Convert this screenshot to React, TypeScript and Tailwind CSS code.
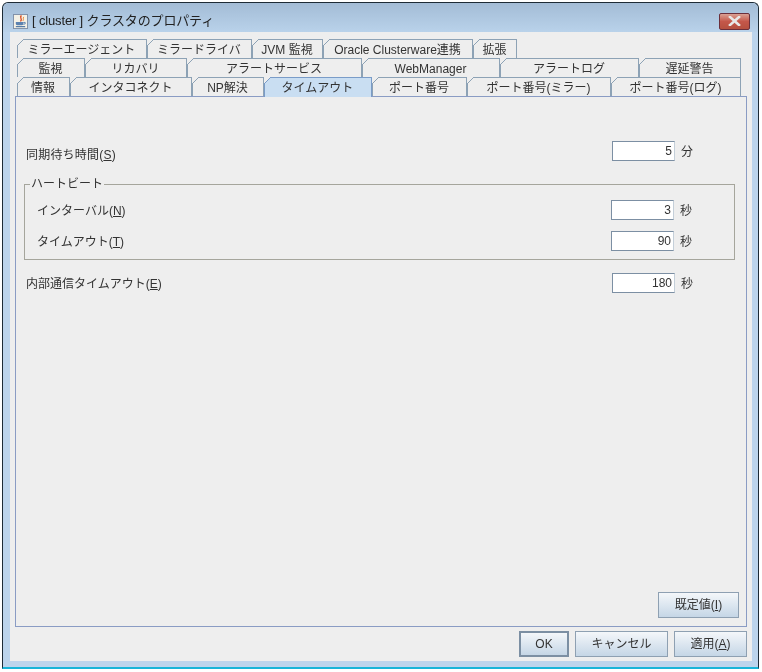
import React, { FunctionComponent } from 'react'

type TabItem = { label: string, width: number, active?: boolean }

const row1: TabItem[] = [
    { label: 'ミラーエージェント', width: 130 },
    { label: 'ミラードライバ', width: 105 },
    { label: 'JVM 監視', width: 71 },
    { label: 'Oracle Clusterware連携', width: 150 },
    { label: '拡張', width: 44 },
]
const row2: TabItem[] = [
    { label: '監視', width: 68 },
    { label: 'リカバリ', width: 102 },
    { label: 'アラートサービス', width: 175 },
    { label: 'WebManager', width: 138 },
    { label: 'アラートログ', width: 139 },
    { label: '遅延警告', width: 102 },
]
const row3: TabItem[] = [
    { label: '情報', width: 53 },
    { label: 'インタコネクト', width: 122 },
    { label: 'NP解決', width: 72 },
    { label: 'タイムアウト', width: 108, active: true },
    { label: 'ポート番号', width: 95 },
    { label: 'ポート番号(ミラー)', width: 144 },
    { label: 'ポート番号(ログ)', width: 130 },
]

const Tab: FunctionComponent<{ item: TabItem }> = ({ item }) => (
    <div
        style={{ width: item.width }}
        className={`relative flex shrink-0 items-center justify-center border-t border-r text-[12px] leading-none text-[#333] ${item.active ? 'z-10 -mb-px h-[20px] border-[#7a9cc8] bg-[#c9def2]' : 'h-[19px] border-[#8da2b5] bg-[#eeeeee]'}`}
    >
        <svg className="absolute top-[-1px] left-0" width="7" height="7" viewBox="0 0 7 7">
            <path d="M0 0H7L0 7Z" fill="#eeeeee" />
            <path d="M0 7L7 0" stroke={item.active ? '#7a9cc8' : '#8da2b5'} strokeWidth="1" fill="none" />
        </svg>
        <span className={`absolute top-[6px] bottom-0 left-0 w-px ${item.active ? 'bg-[#7a9cc8]' : 'bg-[#8da2b5]'}`} />
        <span className={item.active ? '' : 'pt-px'}>{item.label}</span>
    </div>
)

const TabRow: FunctionComponent<{ items: TabItem[] }> = ({ items }) => (
    <div className="flex pl-[7px]">
        {items.map((item) => <Tab key={item.label} item={item} />)}
    </div>
)

const Mn: FunctionComponent<{ c: string }> = ({ c }) => (
    <span>(<span className="underline">{c}</span>)</span>
)

const NumberField: FunctionComponent<{ value: string, unit: string }> = ({ value, unit }) => (
    <div className="flex items-center">
        <div className="flex h-[20px] w-[63px] items-center justify-end border border-[#7c8fa3] border-r-[#c4cfd9] bg-white pr-[2px] text-[12px] text-[#333]">{value}</div>
        <span className="ml-[6px] w-[16px] pt-[2px] text-[12px] text-[#333]">{unit}</span>
    </div>
)

const DialogButton: FunctionComponent<{ width: number, focused?: boolean, children: React.ReactNode }> = ({ width, focused, children }) => (
    <div
        style={{ width }}
        className={`flex h-[26px] items-center justify-center bg-gradient-to-b from-[#f4f7fa] to-[#c5d6e6] text-[12px] text-[#333] ${focused ? 'border-2 border-[#7c8fa3]' : 'border border-[#8ea0b2]'}`}
    >
        {children}
    </div>
)

export default function App() {
    return (
        <div className="h-[672px] w-[762px] overflow-hidden bg-white pl-[2px] pt-[2px] blur-[0.3px] [font-family:'Liberation_Sans','Noto_Sans_CJK_JP',sans-serif]">
            <div className="flex h-[667px] w-[757px] flex-col rounded-t-[6px] border border-b-2 border-[#1d2b36] border-b-[#17b4d8] bg-[#bcd4ec]">
                {/* title bar */}
                <div className="flex h-[29px] shrink-0 items-center rounded-t-[6px] bg-gradient-to-b from-[#a3bcd6] to-[#b9d2ea] pl-[10px] pr-[8px] pt-[7px]">
                    <svg width="15" height="15" viewBox="0 0 16 16">
                        <rect x="0.5" y="0.5" width="15" height="15" fill="#f4f1e6" stroke="#7e8fa6" />
                        <path d="M9 1.5C6 4 11 5 8 8" stroke="#d8532a" strokeWidth="1.5" fill="none" />
                        <path d="M11.5 3C10 5 12 5.5 10.5 7.5" stroke="#e58a3c" strokeWidth="1" fill="none" />
                        <path d="M3 8.5H11V10C11 11.5 10 12 8 12H6C4 12 3 11.5 3 10Z" fill="#5b82b0" />
                        <path d="M11 9H13V10.5L11 11" stroke="#5b82b0" fill="none" />
                        <path d="M3 13.5H13" stroke="#47709f" strokeWidth="1.2" />
                    </svg>
                    <span className="ml-[4px] text-[13px] tracking-[-0.15px] text-[#222]">[ cluster ] クラスタのプロパティ</span>
                    <div className="ml-auto flex h-[17px] w-[31px] items-center justify-center rounded-[2px] border border-[#6b2f3b] bg-gradient-to-b from-[#d9a094] via-[#c4574a] to-[#b5503f]">
                        <svg width="13" height="10" viewBox="0 0 13 10">
                            <path d="M2 1L11 9M11 1L2 9" stroke="#e8e8e8" strokeWidth="2.6" strokeLinecap="square" />
                        </svg>
                    </div>
                </div>

                {/* dialog body */}
                <div className="ml-[7px] mr-[6px] flex h-[629px] flex-col bg-[#eeeeee] pt-[7px]">
                    <div className="relative z-10">
                        <TabRow items={row1} />
                        <TabRow items={row2} />
                        <TabRow items={row3} />
                    </div>
                    <div className="mx-[5px] flex h-[531px] flex-col border border-[#8a9cc4] bg-[#eeeeee]">
                        <div className="flex items-start justify-between pl-[10px] pr-[49px] pt-[44px] text-[12px] text-[#333]">
                            <span className="pt-[5px] tracking-[0.2px]">同期待ち時間<Mn c="S" /></span>
                            <NumberField value="5" unit="分" />
                        </div>
                        <div className="relative ml-[8px] mr-[11px] mt-[20px] h-[76px] border border-[#a5a59c]">
                            <span className="absolute left-[5px] top-[-8px] bg-[#eeeeee] px-[1px] text-[12px] leading-[14px] text-[#333]">ハートビート</span>
                            <div className="flex items-start justify-between pl-[12px] pr-[38px] pt-[15px] text-[12px] text-[#333]">
                                <span className="pt-[2px]">インターバル<Mn c="N" /></span>
                                <NumberField value="3" unit="秒" />
                            </div>
                            <div className="flex items-start justify-between pl-[12px] pr-[38px] pt-[11px] text-[12px] text-[#333]">
                                <span className="pt-[2px]">タイムアウト<Mn c="T" /></span>
                                <NumberField value="90" unit="秒" />
                            </div>
                        </div>
                        <div className="flex items-start justify-between pl-[10px] pr-[49px] pt-[13px] text-[12px] text-[#333]">
                            <span className="pt-[2px]">内部通信タイムアウト<Mn c="E" /></span>
                            <NumberField value="180" unit="秒" />
                        </div>
                        <div className="mt-auto flex justify-end pb-[8px] pr-[7px]">
                            <DialogButton width={81}>既定値<Mn c="I" /></DialogButton>
                        </div>
                    </div>
                    <div className="flex justify-end gap-[6px] pr-[5px] pt-[4px]">
                        <DialogButton width={50} focused>OK</DialogButton>
                        <DialogButton width={93}>キャンセル</DialogButton>
                        <DialogButton width={73}>適用<Mn c="A" /></DialogButton>
                    </div>
                </div>
            </div>
        </div>
    )
}
